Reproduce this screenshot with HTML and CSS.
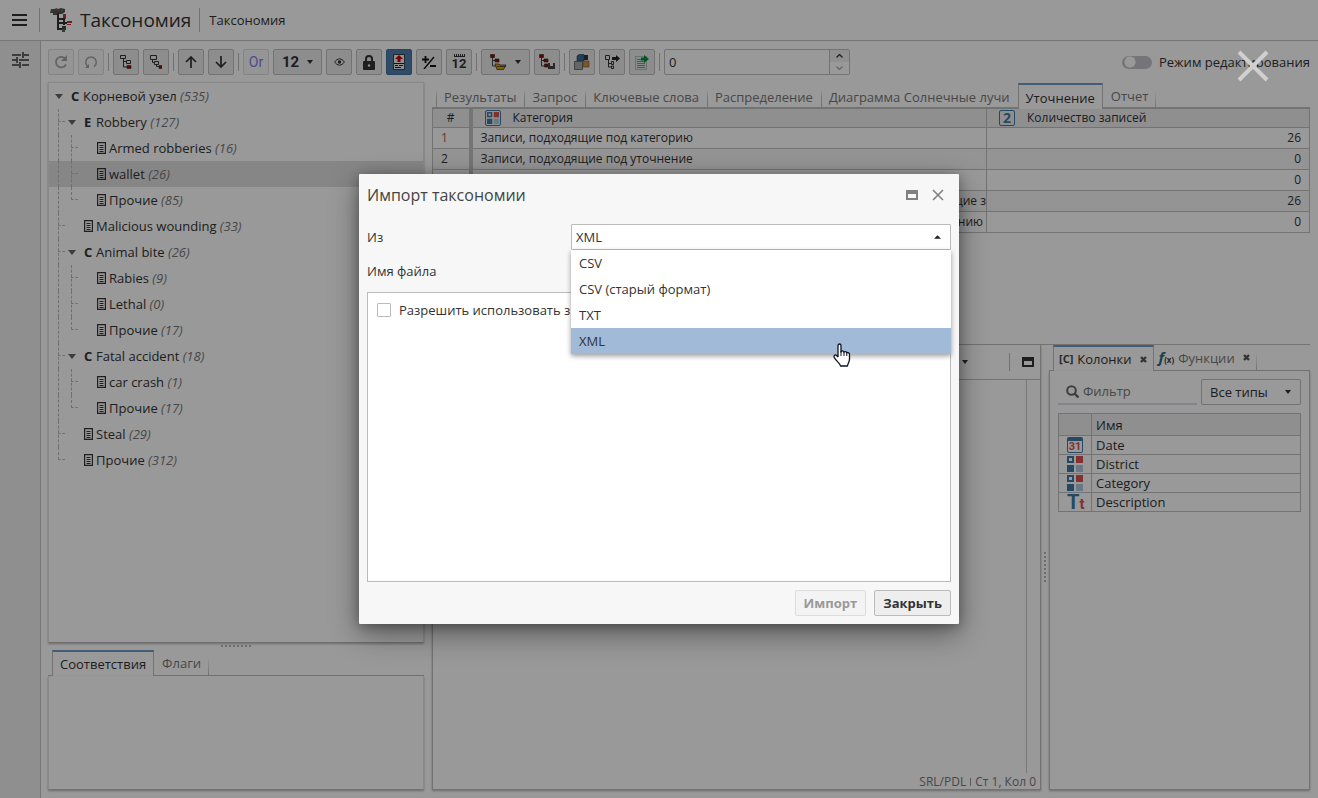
FILE: index.html
```html
<!DOCTYPE html>
<html lang="ru">
<head>
<meta charset="utf-8">
<title>Таксономия</title>
<link rel="stylesheet" href="styles.css">
</head>
<body>
<svg class="sprite" aria-hidden="true">
  <symbol id="doc" viewBox="0 0 9 12"><path fill="none" stroke="#333" stroke-width="1.2" d="M.6.6h7.8v10.8H.6z"/><path stroke="#333" d="M2.5 3.5h4M2.5 5.5h4M2.5 7.5h4M2.5 9.5h4"/></symbol>
  <symbol id="caret" viewBox="0 0 8 5"><path fill="currentColor" d="M0 0h8L4 5z"/></symbol>
  <symbol id="caret-sm" viewBox="0 0 6 4"><path fill="currentColor" d="M0 0h6L3 4z"/></symbol>
  <symbol id="cat" viewBox="0 0 16 16"><path fill="none" stroke="#3f7ba6" stroke-width="2" d="M1 1h5v5H1z"/><path fill="#d9534f" d="M9 0h7v7H9z"/><path fill="#3f7ba6" d="M0 9h7v7H0z"/><path fill="#adc9dc" d="M9 9h7v7H9z"/></symbol>
  <symbol id="window" viewBox="0 0 12 10"><path fill="none" stroke="currentColor" stroke-width="2" d="M1 1h10v8H1z"/><path fill="currentColor" d="M0 0h12v4H0z"/></symbol>
  <symbol id="cross" viewBox="0 0 12 12"><path fill="none" stroke="currentColor" stroke-width="1.6" d="M1 1l10 10M11 1L1 11"/></symbol>
</svg>

<header class="header">
  <button class="plain menu" aria-label="Меню"><svg width="15" height="12" viewBox="0 0 15 12"><path stroke="#333" stroke-width="2" d="M0 1h15M0 6h15M0 11h15"/></svg></button>
  <span class="header-rule"></span>
  <svg class="logo" width="23" height="24" viewBox="0 0 23 24"><path fill="#555" d="M1 1h4l1-1 2 1 3-1 4 1v3l-3 2H8v1H3V5H0z"/><path fill="#3d7a3d" d="M1 2h2v2H1zM11 1h2v2h-2z"/><path fill="#b33" d="M5 1h3v2H5zM13 6h3v5h-3zM17 13h5v2h-5zM17 16h4v1h-4z"/><path fill="none" stroke="#333" stroke-width="2" d="M8 5v16h5M8 11h6v6M8 15h9"/><path fill="#444" d="M12 18h4v4h-4z"/><path fill="#3d7a3d" d="M12 21h3v3h-3z"/></svg>
  <h1 class="title">Таксономия</h1>
  <span class="header-rule short"></span>
  <span class="crumb">Таксономия</span>
</header>

<div class="shell">
  <aside class="rail">
    <button class="plain" aria-label="Настройки"><svg width="17" height="16" viewBox="0 0 17 16"><path fill="none" stroke="#666" stroke-width="2" d="M0 3h9M11 3h6M0 8h5M7 8h10M0 13h7M10 13h7M11 0v6M5 5v6M8 10v6"/></svg></button>
  </aside>

  <main class="content">
    <div class="toolbar">
      <button class="tool off" aria-label="Обновить"><svg width="14" height="14" viewBox="0 0 14 14"><path fill="none" stroke="#555" stroke-width="1.7" d="M12 9.5A5.3 5.3 0 1 1 11.5 4"/><path fill="#555" d="M13 0v6H7z"/></svg></button>
      <button class="tool off" aria-label="Отменить"><svg width="14" height="14" viewBox="0 0 14 14"><path fill="none" stroke="#555" stroke-width="1.5" d="M4 11.600A5.300 5.300 0 1 1 10 11.600"/><path fill="#555" d="M1 13l4-4v4z"/></svg></button>
      <span class="rule"></span>
      <button class="tool" aria-label="Развернуть"><svg width="12" height="14" viewBox="0 0 12 14"><path fill="none" stroke="#333" d="M.5.500h5v3h-5zM3.500 4v8H7M3.500 6.500H6M6.500 5.500h4v3h-4z"/><path fill="#a00" stroke="#333" stroke-width=".6" d="M7 10.500h4v3H7z"/></svg></button>
      <button class="tool" aria-label="Свернуть"><svg width="12" height="14" viewBox="0 0 12 14"><path fill="none" stroke="#333" d="M.5.500h6v4h-6zM2.500 5v2.500H4M4.500 6.500h4v3h-4zM6.500 10v1.500H9"/><path fill="#a00" stroke="#333" stroke-width=".6" d="M9 10.500h3v3H9z"/></svg></button>
      <span class="rule"></span>
      <button class="tool" aria-label="Вверх"><svg width="12" height="12" viewBox="0 0 12 12"><path fill="none" stroke="#333" stroke-width="1.700" d="M6 12V1M1 6l5-5 5 5"/></svg></button>
      <button class="tool" aria-label="Вниз"><svg width="12" height="12" viewBox="0 0 12 12"><path fill="none" stroke="#333" stroke-width="1.700" d="M6 0v11M1 6l5 5 5-5"/></svg></button>
      <span class="rule"></span>
      <button class="tool off or">Or</button>
      <button class="tool wide num">12 <svg width="6" height="4"><use href="#caret-sm"/></svg></button>
      <button class="tool" aria-label="Показать"><svg width="11" height="8" viewBox="0 0 11 8"><path fill="none" stroke="#333" d="M.5 4Q5.500-2.500 10.500 4 5.500 10.500.5 4z"/><circle cx="5.500" cy="4" r="1.700" fill="#333"/></svg></button>
      <button class="tool" aria-label="Заблокировать"><svg width="12" height="15" viewBox="0 0 12 15"><path fill="none" stroke="#333" stroke-width="2" d="M3 7V4a3 3 0 0 1 6 0v3"/><rect y="6" width="12" height="9" rx="1" fill="#333"/><circle cx="6" cy="10.500" r="1.200" fill="#eee"/></svg></button>
      <button class="tool on" aria-label="Определение"><svg width="12" height="16" viewBox="0 0 12 16"><path fill="#eee" stroke="#111" stroke-width=".7" d="M.5.500h11v15H.5z"/><path fill="#c00" d="M6 1l4 4H7.500v3h-3V5H2z"/><path stroke="#222" d="M1 9.500h10M2 11.500h3M6 11.500h4M2 13.500h6"/></svg></button>
      <button class="tool" aria-label="Знак"><svg width="14" height="13" viewBox="0 0 14 13"><path fill="none" stroke="#111" stroke-width="1.800" d="M0 3.500h7M3.500 0v7M8 10h6"/><path stroke="#111" stroke-width="1.400" d="M2 13L12 1"/></svg></button>
      <button class="tool num ticks" aria-label="Нумерация"><svg width="11" height="3" viewBox="0 0 11 3"><path fill="none" stroke="#333" d="M0 2.500h11M.5 0v3M2.500 0v3M4.500 0v3M6.500 0v3M8.500 0v3M10.500 0v3"/></svg><span>12</span></button>
      <span class="rule"></span>
      <button class="tool wide" aria-label="Импорт"><svg width="17" height="16" viewBox="0 0 17 16"><path fill="none" stroke="#444" d="M2.500 3v9H6M2.500 6.500H5"/><path fill="#a00" stroke="#333" stroke-width=".7" d="M.5.500h4v3h-4zM5 5h4v3H5z"/><path fill="#e0a500" stroke="#333" stroke-width=".8" d="M5 10h4l1 1h6l-2.500 4.500H7z"/><path stroke="#333" stroke-width=".8" d="M7 12.500h9"/></svg><svg width="6" height="4"><use href="#caret-sm"/></svg></button>
      <button class="tool" aria-label="Сохранить"><svg width="16" height="16" viewBox="0 0 16 16"><path fill="none" stroke="#444" d="M2.500 3v9H6M2.500 6.500H5"/><path fill="#a00" stroke="#333" stroke-width=".7" d="M.5.500h4v3h-4zM5 5h4v3H5zM5.500 10h4v3h-4z"/><path fill="#444" d="M9 9h2v3h3V9h2v6H9z"/></svg></button>
      <span class="rule"></span>
      <button class="tool" aria-label="Модули"><svg width="16" height="16" viewBox="0 0 16 16"><path fill="#333" d="M10 1h4v5h-4z"/><path fill="#2f6ba3" stroke="#333" stroke-width=".6" d="M3 2l2-1.500h5V7H3z"/><path fill="#d8923a" stroke="#555" stroke-width=".6" d="M9 7h6v6H9z"/><path fill="#aaa" stroke="#555" stroke-width=".8" d="M.5 7.500h8v8h-8z"/></svg></button>
      <button class="tool" aria-label="Экспорт"><svg width="15" height="14" viewBox="0 0 15 14"><path fill="none" stroke="#333" d="M.5.500h4v4h-4zM3.500 5v7H6M3.500 8.500H6M6.500 6.500h2v3h-2zM6.500 11h2v2.500h-2z"/><path fill="#222" d="M7 2h4V0l4 3.500L11 7V5H7z"/></svg></button>
      <button class="tool" aria-label="Экспорт отчета"><svg width="14" height="15" viewBox="0 0 14 15"><path fill="#dfe9ea" stroke="#7a9a9a" stroke-dasharray="1 1" d="M.5 1.500h11v13H.5z"/><path stroke="#7a9a9a" d="M2 4.500h4M2 6.500h7M2 8.500h8M2 10.500h8M2 12.500h8"/><path fill="#00913f" d="M6 2.500h3V0l5 4-5 4V5.500H6z"/></svg></button>
      <span class="rule"></span>
      <div class="spinner">
        <input type="text" value="0" aria-label="Значение">
        <div class="spin">
          <button aria-label="Больше"><svg width="7" height="4" viewBox="0 0 7 4"><path fill="none" stroke="#333" stroke-width="1.300" d="M.5 3.500l3-3 3 3"/></svg></button>
          <button aria-label="Меньше"><svg width="7" height="4" viewBox="0 0 7 4"><path fill="none" stroke="#aaa" stroke-width="1.300" d="M.5.500l3 3 3-3"/></svg></button>
        </div>
      </div>
      <label class="switch"><input type="checkbox">Режим редактирования</label>
    </div>

    <div class="columns">
      <section class="left">
        <div class="tree panel">
          <div class="node"><i class="tw"><svg width="8" height="5"><use href="#caret"/></svg></i><b>C</b><span>Корневой узел <em>(535)</em></span></div>
          <div class="node"><i class="g tee"></i><i class="tw"><svg width="8" height="5"><use href="#caret"/></svg></i><b>E</b><span>Robbery <em>(127)</em></span></div>
          <div class="node"><i class="g line"></i><i class="g tee"></i><i class="g"></i><b><svg width="9" height="12"><use href="#doc"/></svg></b><span>Armed robberies <em>(16)</em></span></div>
          <div class="node picked"><i class="g line"></i><i class="g tee"></i><i class="g"></i><b><svg width="9" height="12"><use href="#doc"/></svg></b><span>wallet <em>(26)</em></span></div>
          <div class="node"><i class="g line"></i><i class="g end"></i><i class="g"></i><b><svg width="9" height="12"><use href="#doc"/></svg></b><span>Прочие <em>(85)</em></span></div>
          <div class="node"><i class="g tee"></i><i class="g"></i><b><svg width="9" height="12"><use href="#doc"/></svg></b><span>Malicious wounding <em>(33)</em></span></div>
          <div class="node"><i class="g tee"></i><i class="tw"><svg width="8" height="5"><use href="#caret"/></svg></i><b>C</b><span>Animal bite <em>(26)</em></span></div>
          <div class="node"><i class="g line"></i><i class="g tee"></i><i class="g"></i><b><svg width="9" height="12"><use href="#doc"/></svg></b><span>Rabies <em>(9)</em></span></div>
          <div class="node"><i class="g line"></i><i class="g tee"></i><i class="g"></i><b><svg width="9" height="12"><use href="#doc"/></svg></b><span>Lethal <em>(0)</em></span></div>
          <div class="node"><i class="g line"></i><i class="g end"></i><i class="g"></i><b><svg width="9" height="12"><use href="#doc"/></svg></b><span>Прочие <em>(17)</em></span></div>
          <div class="node"><i class="g tee"></i><i class="tw"><svg width="8" height="5"><use href="#caret"/></svg></i><b>C</b><span>Fatal accident <em>(18)</em></span></div>
          <div class="node"><i class="g line"></i><i class="g tee"></i><i class="g"></i><b><svg width="9" height="12"><use href="#doc"/></svg></b><span>car crash <em>(1)</em></span></div>
          <div class="node"><i class="g line"></i><i class="g end"></i><i class="g"></i><b><svg width="9" height="12"><use href="#doc"/></svg></b><span>Прочие <em>(17)</em></span></div>
          <div class="node"><i class="g tee"></i><i class="g"></i><b><svg width="9" height="12"><use href="#doc"/></svg></b><span>Steal <em>(29)</em></span></div>
          <div class="node"><i class="g end"></i><i class="g"></i><b><svg width="9" height="12"><use href="#doc"/></svg></b><span>Прочие <em>(312)</em></span></div>
        </div>
        <div class="grip"></div>
        <div class="tabs inset">
          <button class="tab active">Соответствия</button>
          <button class="tab">Флаги</button>
          <span class="tab-end"></span>
        </div>
        <div class="panel matches"></div>
      </section>

      <section class="right">
        <div class="upper">
          <div class="tabs inset double">
            <button class="tab">Результаты</button>
            <button class="tab">Запрос</button>
            <button class="tab">Ключевые слова</button>
            <button class="tab">Распределение</button>
            <button class="tab">Диаграмма Солнечные лучи</button>
            <button class="tab active">Уточнение</button>
            <button class="tab">Отчет</button>
            <span class="tab-end"></span>
          </div>
          <table class="grid">
            <colgroup><col class="c-num"><col><col class="c-count"></colgroup>
            <thead><tr>
              <th class="hash">#</th>
              <th><div class="head"><span class="badge"><svg width="12" height="12"><use href="#cat"/></svg></span>Категория</div></th>
              <th><div class="head"><span class="badge two">2</span>Количество записей</div></th>
            </tr></thead>
            <tbody>
              <tr><td class="idx warm">1</td><td>Записи, подходящие под категорию</td><td class="n">26</td></tr>
              <tr class="alt"><td class="idx">2</td><td>Записи, подходящие под уточнение</td><td class="n">0</td></tr>
              <tr><td class="idx"></td><td></td><td class="n">0</td></tr>
              <tr class="alt"><td class="idx"></td><td class="tail cut">подходящие з</td><td class="n">26</td></tr>
              <tr><td class="idx"></td><td class="tail">уточнению</td><td class="n">0</td></tr>
            </tbody>
          </table>
        </div>

        <div class="lower">
          <div class="editor">
            <div class="editor-bar"><button class="plain" aria-label="Параметры"><svg width="6" height="4"><use href="#caret-sm"/></svg></button><span class="rule"></span><button class="plain" aria-label="Развернуть"><svg width="12" height="10"><use href="#window"/></svg></button></div>
            <div class="code"><div class="gutter"></div></div>
            <div class="status"><span>SRL/PDL</span><i></i><span>Ст 1, Кол 0</span></div>
          </div>
          <div class="vgrip"></div>
          <div class="side">
            <div class="tabs inset">
              <button class="tab active"><b class="cc">[C]</b>Колонки<svg class="x" width="7" height="7" viewBox="0 0 7 7"><path stroke="#555" stroke-width="2.400" d="M1 1l5 5M6 1L1 6"/></svg></button>
              <button class="tab"><b class="fx">f<small>(x)</small></b>Функции<svg class="x" width="7" height="7" viewBox="0 0 7 7"><path stroke="#555" stroke-width="2.400" d="M1 1l5 5M6 1L1 6"/></svg></button>
              <span class="tab-end"></span>
            </div>
            <div class="side-body">
              <div class="filters">
                <label class="search"><svg width="13" height="13" viewBox="0 0 13 13"><circle cx="5.500" cy="5.500" r="4.300" fill="none" stroke="#666" stroke-width="2"/><path stroke="#666" stroke-width="2.400" d="M8.500 8.500l4 4"/></svg><input type="text" placeholder="Фильтр" aria-label="Фильтр"></label>
                <div class="types"><select aria-label="Типы"><option>Все типы</option></select><svg width="6" height="4"><use href="#caret-sm"/></svg></div>
              </div>
              <table class="names">
                <thead><tr><th class="ico"></th><th>Имя</th></tr></thead>
                <tbody>
                  <tr><td class="ico"><span class="cal">31</span></td><td>Date</td></tr>
                  <tr><td class="ico"><svg width="16" height="16"><use href="#cat"/></svg></td><td>District</td></tr>
                  <tr><td class="ico"><svg width="16" height="16"><use href="#cat"/></svg></td><td>Category</td></tr>
                  <tr><td class="ico"><span class="tt">T<i>t</i></span></td><td>Description</td></tr>
                </tbody>
              </table>
            </div>
          </div>
        </div>
      </section>
    </div>
  </main>
</div>

<div class="overlay">
  <button class="plain overlay-close" aria-label="Закрыть окно"><svg width="32" height="32" viewBox="0 0 32 32"><path stroke="#d0d0d0" stroke-width="4" d="M2 2l28 28M30 2L2 30"/></svg></button>
  <div class="dialog" role="dialog" aria-labelledby="dlg-title">
    <div class="dlg-head">
      <h2 id="dlg-title">Импорт таксономии</h2>
      <button class="plain" aria-label="Развернуть"><svg width="12" height="10"><use href="#window"/></svg></button>
      <button class="plain" aria-label="Закрыть"><svg width="12" height="12"><use href="#cross"/></svg></button>
    </div>
    <div class="field">
      <label for="from">Из</label>
      <div class="combo">
        <select id="from"><option>XML</option><option>CSV</option><option>CSV (старый формат)</option><option>TXT</option></select>
        <svg width="7" height="4" viewBox="0 0 8 4"><path fill="#222" d="M0 4h8L4 0z"/></svg>
        <ul class="options" role="listbox">
          <li role="option">CSV</li>
          <li role="option">CSV (старый формат)</li>
          <li role="option">TXT</li>
          <li role="option" aria-selected="true">XML</li>
        </ul>
        <svg class="pointer" width="18" height="24" viewBox="0 0 18 24"><path fill="#fff" stroke="#112" stroke-width="1.300" stroke-linejoin="round" d="M5 14V2.500a1.500 1.500 0 0 1 3 0V9c0-1.500 3-1.500 3 .5 0-1.500 2.800-1.200 2.800.8 0-1.300 2.700-1 2.700 1V16c0 3-1.500 4-2 7H7.500C7 20 1 16 1 13.500c0-1.500 1.500-2 2.500-1L5 14"/><path stroke="#112" d="M8 8v5M11 9.500V13M13.800 10.500V13"/></svg>
      </div>
    </div>
    <div class="field"><span>Имя файла</span></div>
    <div class="box"><label><input type="checkbox">Разрешить использовать з</label></div>
    <div class="actions"><button class="btn" disabled>Импорт</button><button class="btn">Закрыть</button></div>
  </div>
</div>
</body>
</html>
```
FILE: styles.css
```css
* { box-sizing: border-box; }
body {
  margin: 0;
  height: 100vh;
  display: flex;
  flex-direction: column;
  overflow: hidden;
  background: #fff;
  color: #333;
  font: 13px/18px "Open Sans", "Noto Sans", sans-serif;
}
button, input, select { font: inherit; color: inherit; margin: 0; }
.sprite { position: absolute; width: 0; height: 0; }
svg { display: block; flex: none; }
.plain { background: none; border: 0; padding: 0; }

/* header */
.header {
  height: 41px;
  flex: none;
  display: flex;
  align-items: center;
  padding-left: 12px;
  border-bottom: 1px solid #c6c6c6;
}
.header-rule { width: 1px; height: 24px; margin-left: 12px; background: #c0c0c0; }
.header-rule.short { margin: 0 9px 0 8px; }
.logo { margin: 0 7px 0 10px; }
.title { margin: 0; font-size: 19px; line-height: 28px; font-weight: 400; }

.shell { flex: 1; min-height: 0; display: flex; }
.rail {
  width: 41px;
  padding: 11px 0 0 12px;
  background: #eee;
  border-right: 1px solid #c6c6c6;
}
.content {
  flex: 1;
  min-width: 0;
  display: flex;
  flex-direction: column;
  gap: 7px;
  padding: 8px 8px 8px 7px;
}

/* toolbar */
.toolbar { display: flex; align-items: center; gap: 4px; height: 26px; flex: none; }
.tool {
  width: 26px;
  height: 26px;
  padding: 0;
  display: flex;
  align-items: center;
  justify-content: center;
  background: #ececec;
  border: 1px solid #c0c0c0;
  border-radius: 2px;
}
.tool.wide { width: 49px; gap: 8px; }
.tool.off { background: #f8f8f8; border-color: #dcdcdc; }
.tool.off svg { opacity: .5; }
.tool.or { color: #8080f0; font: 14px/18px Roboto, sans-serif; }
.tool.num { font: 700 15px/18px Roboto, sans-serif; }
.tool.ticks { flex-direction: column; font-size: 13px; line-height: 13px; }
.tool.on { background: #4d7fae; border-color: #447099; }
.rule { width: 1px; height: 18px; background: #bbb; }
.spinner { display: flex; width: 186px; height: 26px; border: 1px solid #c0c0c0; border-radius: 2px; }
.spinner input { flex: 1; min-width: 0; border: 0; padding: 0 4px; background: none; }
.spin { width: 20px; display: flex; flex-direction: column; border-left: 1px solid #c0c0c0; }
.spin button { flex: 1; display: flex; align-items: center; justify-content: center; border: 0; padding: 0; background: #fff; }
.spin button:first-child { background: #f0f0f0; }
.switch { margin-left: auto; display: flex; align-items: center; gap: 7px; white-space: nowrap; }
.switch input {
  appearance: none;
  width: 30px;
  height: 13px;
  border-radius: 7px;
  background: radial-gradient(circle at 8px 6px, #fff 5px, #c4c4c8 6px);
}

/* columns */
.columns { flex: 1; min-height: 0; display: grid; grid-template-columns: 376px minmax(0, 1fr); gap: 8px; }
.left, .right { display: flex; flex-direction: column; min-height: 0; min-width: 0; }
.panel { border: 1px solid #e4e4e4; border-bottom-color: #bbb; box-shadow: 0 1px 2px rgba(0, 0, 0, .3); }
.tree { flex: 1; overflow: hidden; }
.matches { height: 114px; border-top: 0; }
.grip {
  width: 30px;
  height: 2px;
  flex: none;
  margin: 2px auto 3px;
  background: repeating-linear-gradient(90deg, #b4b4b4 0 2px, transparent 2px 4px);
}

.node { display: flex; height: 26px; align-items: center; padding-left: 3px; }
.node.picked { background: #e0e0e0; }
.node b { width: 18px; display: flex; padding-left: 6px; font-size: 13px; }
.node em { color: #777; }
.tw, .g { width: 13px; height: 26px; position: relative; display: flex; align-items: center; justify-content: flex-end; color: #666; }
.tw { padding-right: 2px; }
.line::before, .tee::before, .end::before {
  content: "";
  position: absolute;
  left: 6px;
  top: 0;
  bottom: 0;
  border-left: 1px dashed #bbb;
}
.end::before { bottom: 13px; }
.tee::after, .end::after {
  content: "";
  position: absolute;
  left: 6px;
  right: 0;
  top: 12px;
  border-top: 1px dashed #bbb;
}

/* tabs */
.tabs { display: flex; height: 26px; flex: none; border-bottom: 1px solid #c0c0c0; }
.tabs.double { margin-top: 1px; border-bottom-width: 2px; }
.tabs.inset { padding-left: 4px; }
.tab {
  display: flex;
  align-items: center;
  height: 25px;
  padding: 1px 8px 0 7px;
  border: 0;
  border-image: linear-gradient(#fff 30%, #c0c0c0 60%) 1;
  border-style: solid;
  border-width: 0 0 0 1px;
  background: none;
  color: #777;
  white-space: nowrap;
}
.tabs.double .tab { padding-top: 2px; }
.tab-end { width: 1px; height: 18px; margin-top: 7px; background: linear-gradient(#fff, #c0c0c0); }
.tab.active {
  height: 26px;
  padding: 0 7px;
  border: 1px solid #c0c0c0;
  border-image: none;
  border-top: 2px solid #6f9cc6;
  border-bottom: 0;
  background: #fff;
  color: #333;
}
.tab.active + .tab { padding: 1px 7px 0 8px; border-image: none; border-width: 0; }

/* statistics table */
.upper { height: 263px; flex: none; border-bottom: 1px solid #c0c0c0; }
.grid { width: 100%; border-collapse: collapse; table-layout: fixed; font-size: 12px; }
.c-num { width: 38px; }
.c-count { width: 323px; }
.grid th { height: 18px; padding: 0; background: #eee; font-weight: 400; border: 1px solid #c0c0c0; border-top: 0; line-height: 17px; }
.grid td { height: 21px; padding: 0 8px; border: 1px solid #c0c0c0; line-height: 20px; white-space: nowrap; overflow: hidden; }
.grid .hash, .grid .idx { border-right: 4px solid #c4c4c4; }
.grid .alt td { background: #f7f7f7; }
.grid .warm { color: #a55a44; }
.grid td.n { text-align: right; }
.grid td.tail { text-align: right; padding-right: 3px; }
.grid td.cut { padding-right: 0; }
.head { display: flex; align-items: center; gap: 12px; padding-left: 12px; height: 17px; }
.badge { width: 16px; height: 16px; display: flex; align-items: center; justify-content: center; border: 1px solid #3f7ba6; border-radius: 2px; }
.badge.two { color: #3f7ba6; font-weight: 700; font-size: 14px; line-height: 14px; }

/* lower area */
.lower { flex: 1; min-height: 0; display: grid; grid-template-columns: minmax(0, 1fr) 8px 261px; }
.editor { display: flex; flex-direction: column; border: 1px solid #c0c0c0; border-top: 0; box-shadow: 0 1px 2px rgba(0, 0, 0, .3); }
.editor-bar { height: 34px; display: flex; align-items: center; justify-content: flex-end; padding-right: 6px; }
.editor-bar .rule { margin: 0 12px 0 41px; }
.code { flex: 1; display: flex; justify-content: flex-end; border-top: 1px solid #c0c0c0; }
.gutter { width: 14px; border-left: 1px solid #c8c8c8; }
.status { display: flex; align-items: center; justify-content: flex-end; gap: 4px; height: 16px; padding: 2px 4px 0 0; font-size: 12px; color: #777; }
.status i { width: 1px; height: 8px; background: #999; }
.vgrip { width: 2px; height: 32px; justify-self: center; align-self: center; background: repeating-linear-gradient(#b4b4b4 0 2px, transparent 2px 4px); }
.side { display: flex; flex-direction: column; min-width: 0; }
.side .tab.active { padding: 0 6px 0 5px; }
.side .tab.active + .tab { padding: 0 6px 0 5px; }
.side-body { flex: 1; padding: 8px; border: 1px solid #c0c0c0; border-top: 0; box-shadow: 0 1px 2px rgba(0, 0, 0, .3); }
.cc { margin-right: 4px; font-size: 11px; color: #444; }
.fx { margin-right: 4px; font: italic 700 15px/16px "Open Sans", sans-serif; color: #286b7d; }
.fx small { font: 700 8px/12px "Open Sans", sans-serif; color: #444; }
.x { margin-left: 8px; }
.filters { display: flex; gap: 4px; height: 26px; }
.search { flex: 1; min-width: 0; display: flex; align-items: center; gap: 4px; padding-left: 8px; border-bottom: 2px solid #d8dee6; }
.search input { width: 100%; min-width: 0; border: 0; padding: 0; background: none; }
.search input::placeholder { color: #777; opacity: 1; }
.types { position: relative; width: 100px; }
.types select { appearance: none; width: 100%; height: 26px; padding: 0 8px; border: 1px solid #c0c0c0; border-radius: 2px; background: #fff; }
.types svg { position: absolute; right: 10px; top: 11px; }
.names { width: 100%; margin-top: 8px; border-collapse: collapse; table-layout: fixed; }
.names th, .names td { height: 19px; padding: 0 4px; border: 1px solid #c0c0c0; text-align: left; font-weight: 400; line-height: 18px; }
.names th { height: 22px; background: #eee; }
.names .ico { width: 33px; padding: 0 8px; }
.cal { display: block; width: 16px; height: 16px; border: 1px solid #3f7ba6; border-top-width: 4px; border-radius: 2px; color: #d9534f; font: 700 11px/12px Roboto, sans-serif; text-align: center; }
.tt { display: block; height: 16px; font: 700 20px/16px Roboto, sans-serif; color: #3f7ba6; white-space: nowrap; }
.tt i { font: 700 15px/15px Roboto, sans-serif; color: #d9534f; }

/* dialog */
.overlay { position: absolute; inset: 0; display: flex; align-items: center; justify-content: center; background: rgba(0, 0, 0, .4); }
.overlay-close { position: absolute; top: 50px; right: 49px; }
.dialog {
  width: 600px;
  height: 450px;
  display: flex;
  flex-direction: column;
  padding: 8px;
  background: #f7f7f7;
  border-radius: 1px;
  box-shadow: 0 10px 30px rgba(0, 0, 0, .4), 0 2px 12px rgba(0, 0, 0, .3);
}
.dlg-head { display: flex; align-items: center; gap: 14px; height: 26px; padding-right: 7px; color: #808080; }
.dlg-head h2 { flex: 1; margin: 0; color: #444; font-size: 16px; line-height: 24px; font-weight: 400; }
.field { display: grid; grid-template-columns: 204px 1fr; align-items: center; height: 26px; margin-top: 16px; }
.field + .field { margin-top: 8px; }
.combo { position: relative; }
.combo select { appearance: none; display: block; width: 100%; height: 26px; padding: 0 4px; border: 1px solid #bbb; border-radius: 1px; background: #fff; }
.combo > svg { position: absolute; right: 10px; top: 11px; }
.options { position: absolute; z-index: 1; top: 26px; left: 0; right: 0; margin: 0; padding: 0; list-style: none; background: #fff; box-shadow: 0 2px 5px rgba(0, 0, 0, .4); }
.options li { height: 26px; padding: 0 8px; line-height: 26px; }
.options li[aria-selected] { background: #a0bad7; }
.combo > .pointer { z-index: 2; top: 119px; right: 100px; }
.box { flex: 1; margin: 8px 0; padding: 8px 9px; border: 1px solid #bbb; background: #fff; }
.box label { display: flex; align-items: center; gap: 8px; }
.box input { appearance: none; width: 14px; height: 14px; border: 1px solid #bbb; border-radius: 1px; background: #fff; }
.actions { display: flex; justify-content: flex-end; gap: 8px; }
.btn { height: 26px; padding: 0 8px; border: 1px solid #bbb; border-radius: 2px; background: #eee; font-weight: 700; }
.btn:disabled { color: #999; border-color: #ddd; background: #f3f3f3; }
```
